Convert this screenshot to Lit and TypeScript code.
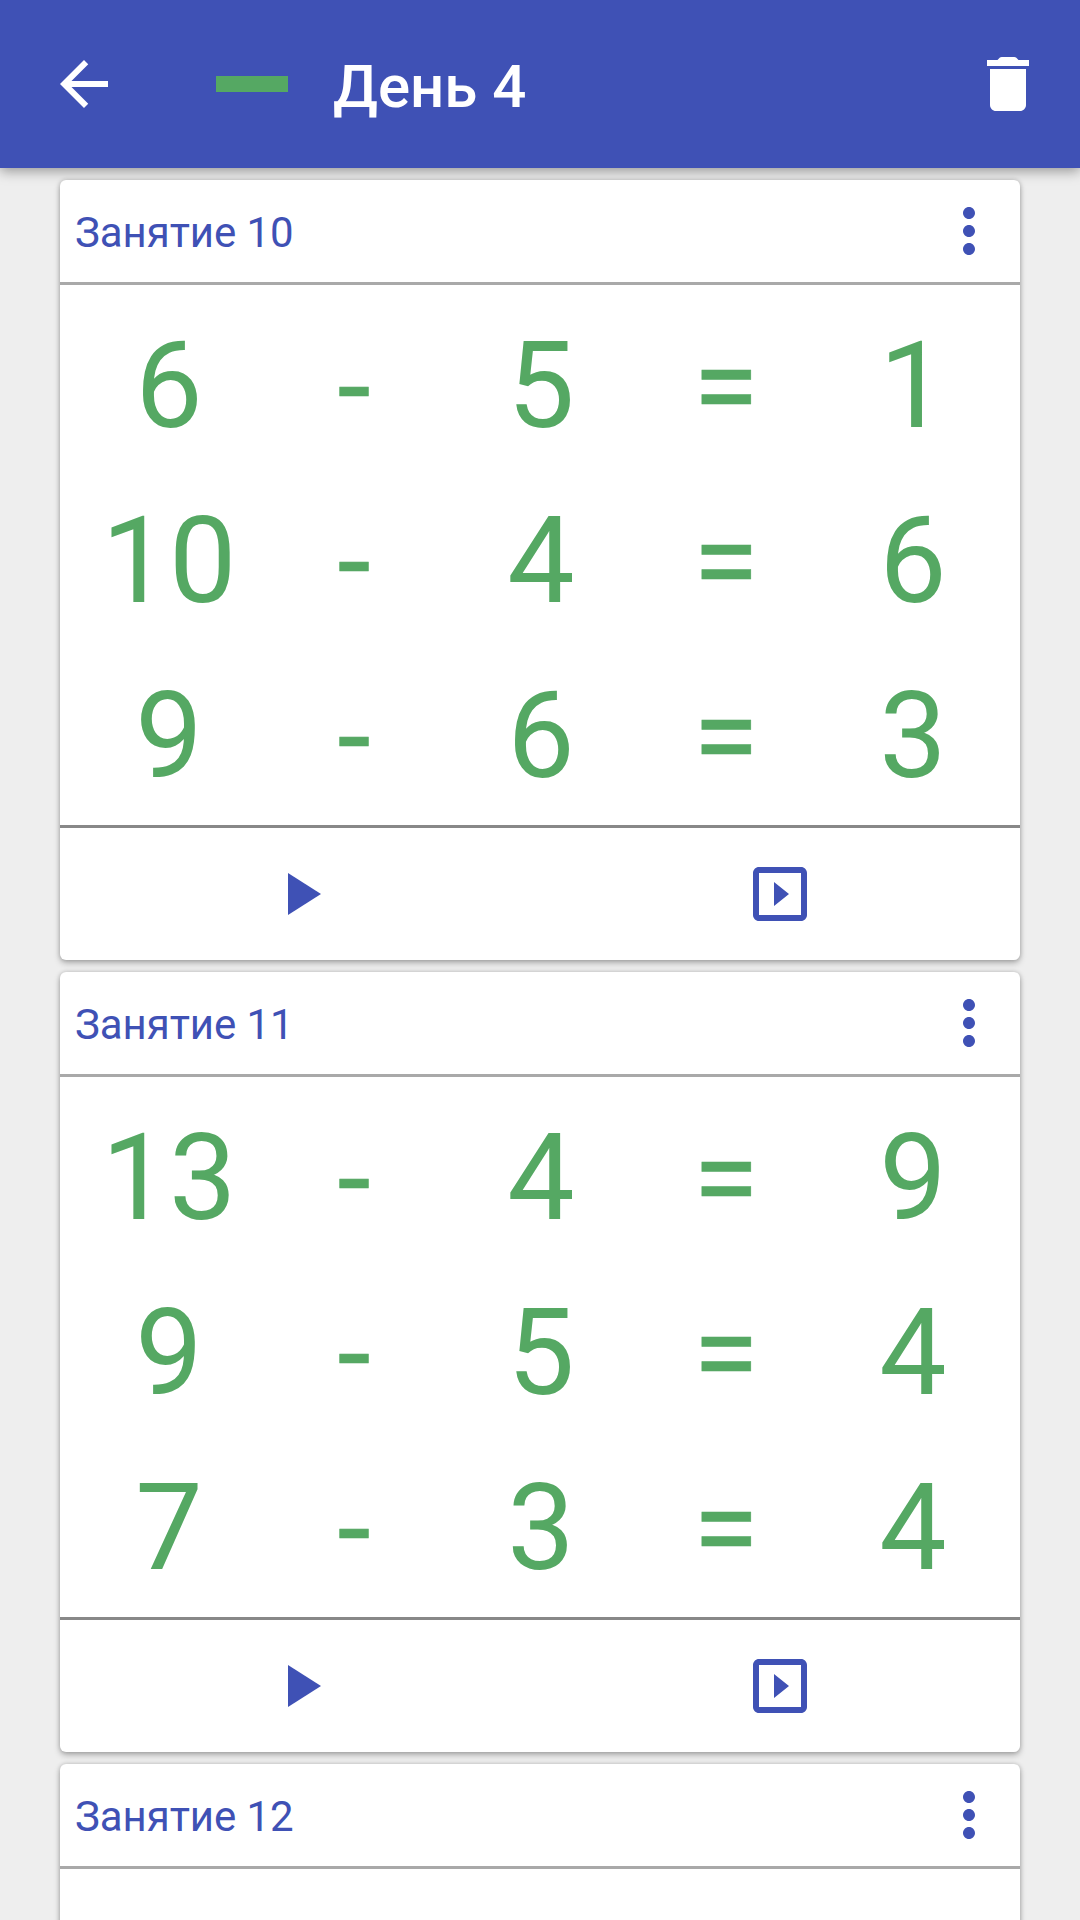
import { LitElement, html, css, svg } from "lit";
import { customElement, property } from "lit/decorators.js";

interface Lesson {
  n: number;
  rows: [number, number][];
}

const lessons: Lesson[] = [
  { n: 10, rows: [[6, 5], [10, 4], [9, 6]] },
  { n: 11, rows: [[13, 4], [9, 5], [7, 3]] },
  { n: 12, rows: [] },
];

const icons = {
  back: svg`<path d="M20 11H7.83l5.59-5.59L12 4l-8 8 8 8 1.41-1.41L7.83 13H20v-2z"/>`,
  trash: svg`<path d="M6 19c0 1.1.9 2 2 2h8c1.1 0 2-.9 2-2V7H6v12zM19 4h-3.5l-.71-.71c-.18-.18-.44-.29-.7-.29H9.91c-.26 0-.52.11-.7.29L8.5 4H5v2h14V4z"/>`,
  more: svg`<path d="M12 8c1.1 0 2-.9 2-2s-.9-2-2-2-2 .9-2 2 .9 2 2 2zm0 2c-1.1 0-2 .9-2 2s.9 2 2 2 2-.9 2-2-.9-2-2-2zm0 6c-1.1 0-2 .9-2 2s.9 2 2 2 2-.9 2-2-.9-2-2-2z"/>`,
  play: svg`<path d="M8 5v14l11-7z"/>`,
  slideshow: svg`<path d="M10 8v8l5-4-5-4zm9-5H5c-1.1 0-2 .9-2 2v14c0 1.1.9 2 2 2h14c1.1 0 2-.9 2-2V5c0-1.1-.9-2-2-2zm0 16H5V5h14v14z"/>`,
};

const icon = (name: keyof typeof icons) =>
  html`<svg class="icon" viewBox="0 0 24 24" aria-hidden="true">${icons[name]}</svg>`;

const iconStyles = css`
  .icon {
    display: block;
    width: 72px;
    height: 72px;
    fill: currentColor;
    flex: none;
  }
`;

@customElement("lesson-card")
export class LessonCard extends LitElement {
  @property({ attribute: false }) lesson!: Lesson;

  static styles = [
    iconStyles,
    css`
      :host {
        display: flex;
        flex-direction: column;
        box-sizing: border-box;
        height: 780px;
        flex: none;
        background: #fff;
        border-radius: 6px;
        color: #3f51b5;
        box-shadow: 0 3px 6px rgba(0, 0, 0, 0.27), 0 0 4px rgba(0, 0, 0, 0.18);
      }
      .head {
        display: flex;
        align-items: center;
        justify-content: space-between;
        box-sizing: border-box;
        height: 105px;
        padding: 0 15px;
        border-bottom: 3px solid #a9a9a9;
      }
      .name {
        font-size: 42px;
        line-height: 50px;
        letter-spacing: -0.1px;
        padding-top: 3px;
      }
      .rows {
        display: grid;
        grid-template-columns: repeat(5, 1fr);
        grid-auto-rows: 175px;
        box-sizing: border-box;
        height: 543px;
        padding: 14px 14px 0 16px;
        border-bottom: 3px solid #888;
        color: #55a863;
        font-size: 120px;
        line-height: 175px;
        text-align: center;
      }
      .op {
        padding: 1px 2px 0 0;
        -webkit-text-stroke: 0.6px currentColor;
      }
      .actions {
        flex: 1;
        display: grid;
        grid-template-columns: 1fr 1fr;
        place-items: center;
      }
    `,
  ];

  render() {
    const { n, rows } = this.lesson;
    return html`
      <div class="head">
        <span class="name">Занятие ${n}</span>
        ${icon("more")}
      </div>
      <div class="rows">
        ${rows.map(
          ([a, b]) => html`
            <span>${a}</span><span class="op">-</span><span>${b}</span><span class="op">=</span><span>${a - b}</span>
          `
        )}
      </div>
      <div class="actions">${icon("play")}${icon("slideshow")}</div>
    `;
  }
}

@customElement("app-root")
export class AppRoot extends LitElement {
  static styles = [
    iconStyles,
    css`
      :host {
        display: flex;
        flex-direction: column;
        width: 1080px;
        height: 1920px;
        overflow: hidden;
        background: #eeeeee;
        font-family: Roboto, "Noto Sans", sans-serif;
      }
      .bar {
        display: flex;
        align-items: center;
        box-sizing: border-box;
        height: 168px;
        flex: none;
        padding: 0 36px 0 48px;
        background: #3f51b5;
        color: #fff;
        box-shadow: 0 3px 12px rgba(0, 0, 0, 0.38);
      }
      .minus {
        width: 72px;
        height: 15.4px;
        margin: 0 45px 0 96px;
        background: #55a863;
      }
      .title {
        flex: 1;
        font-size: 60px;
        font-weight: 500;
        line-height: 70px;
        padding-top: 5px;
      }
      .list {
        flex: 1;
        min-height: 0;
        display: flex;
        flex-direction: column;
        gap: 12px;
        padding: 12px 60px 0;
      }
    `,
  ];

  render() {
    return html`
      <header class="bar">
        ${icon("back")}
        <span class="minus"></span>
        <span class="title">День 4</span>
        ${icon("trash")}
      </header>
      <main class="list">
        ${lessons.map((l) => html`<lesson-card .lesson=${l}></lesson-card>`)}
      </main>
    `;
  }
}
